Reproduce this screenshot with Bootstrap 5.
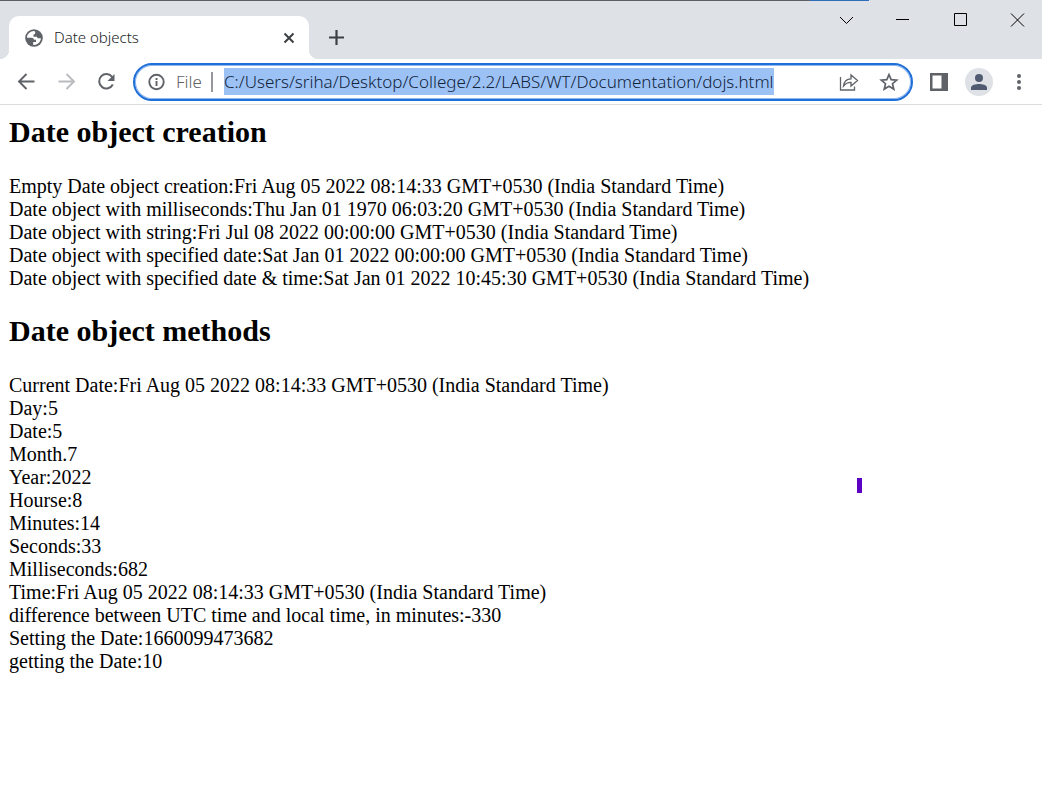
<!DOCTYPE html>
<html lang="en">
<head>
<meta charset="utf-8">
<meta name="viewport" content="width=device-width, initial-scale=1">
<title>Date objects</title>
<link rel="stylesheet" href="https://cdn.jsdelivr.net/npm/bootstrap@5.3.0/dist/css/bootstrap.min.css">
<style>
  body { font-family: "Noto Sans", "Open Sans", sans-serif; background: #fff; }
  svg { display: block; flex: none; fill: none; }
  .top-line { height: 1px; background: #dee1e6; }
  .top-line .dark-part { flex: 0 1 810px; background: #5f6066; }
  .top-line .blue-part { width: 59px; background: #2f6db8; }
  .tab-strip { background: #dee1e6; height: 58px; }
  .page-tab { width: 300px; height: 43px; margin-left: 9px; border-radius: 10px 10px 0 0; background: #fff; color: #3c4043; font-size: 15px; padding: 0 13px 0 16px; }
  .page-tab::before, .page-tab::after { content: ""; position: absolute; bottom: 0; width: 9px; height: 9px; }
  .page-tab::before { left: -9px; background: radial-gradient(circle at 0 0, transparent 9px, #fff 9px); }
  .page-tab::after { right: -9px; background: radial-gradient(circle at 100% 0, transparent 9px, #fff 9px); }
  .tab-title { margin-left: 11px; font-weight: 300; color: #202124; }
  .plain-btn { border: 0; background: none; padding: 0; color: #5f6368; stroke: currentColor; }
  .new-tab { margin: 0 0 14px 16px; color: #3c4043; }
  .win-btns { gap: 37px; margin-right: 15px; padding-top: 9px; }
  .win-btns .plain-btn { color: #000; }
  .tool-row { height: 46px; border-bottom: 1px solid #dadce0; padding: 0 13px 0 16px; }
  .nav-btns { gap: 20px; }
  .right-btns { gap: 16px; margin-left: 16px; }
  .address { height: 38px; border: 2px solid #1f6fd8; border-radius: 19px; margin-left: 16px; padding: 0 12px 0 11px; box-shadow: inset 0 0 0 1px #8fb9f0; }
  .scheme { color: #5f6368; font-size: 17px; font-weight: 300; line-height: 20px; margin-left: 10px; width: 28px; }
  .scheme-sep { width: 2px; height: 20px; background: #96989b; margin: 0 11px 0 7px; }
  .url-field { border: 0; outline: 0; padding: 0; font-size: 17px; font-weight: 300; height: 27px; line-height: 27px; color: #1d2b3e; min-width: 0; }
  .url-field::selection { background: #9cc2f5; color: #12243c; }
  .avatar { width: 28px; height: 28px; background: #dee1e6; }
  .doc { font: 20px/23px "Liberation Serif", serif; color: #000; padding: 10px 9px; }
  .doc h2 { font-size: 30px; line-height: 34px; font-weight: 700; margin: 0 0 26px; }
  .doc p { margin: 0 0 24px; }
  .caret-mark { top: 478px; left: 82.2%; width: 5px; height: 15px; background: #5b00c4; }
</style>
</head>
<body>
<header>
  <div class="top-line d-flex"><div class="dark-part"></div><div class="blue-part"></div></div>
  <div class="tab-strip d-flex align-items-end">
    <div class="page-tab position-relative d-flex align-items-center">
      <svg width="18" height="18" viewBox="0 0 18 18"><circle cx="9" cy="9" r="8.800" fill="#5f6368"/><path d="M9.500 2.100C5.400 1.900 2 5 2 8.700H6.400C8 8.700 8.900 9.600 8.900 10.800H11V13H8.200V15.900C12 16.300 15.900 13.300 15.900 9.300H13.500C12.500 9.300 12 8.700 12 7.800H8.500V5.400C9.700 5.400 10.200 5 10.200 4.200V3.200Z" fill="#fff"/></svg>
      <span class="tab-title flex-grow-1">Date objects</span>
      <button class="plain-btn" aria-label="Close tab"><svg width="14" height="14" viewBox="0 0 14 14" stroke="#3c4043" stroke-width="2"><path d="M2.500 2.500l9 9M11.500 2.500l-9 9"/></svg></button>
    </div>
    <button class="plain-btn new-tab" aria-label="New tab"><svg width="22" height="15" viewBox="0 0 22 15" stroke-width="2.200"><path d="M4 7.500h15M11.500 0v15"/></svg></button>
    <div class="win-btns d-flex align-self-start ms-auto">
      <button class="plain-btn" aria-label="Search tabs"><svg width="20" height="20" viewBox="0 0 20 20"><path d="M4 7l6.500 6.500L17 7"/></svg></button>
      <button class="plain-btn" aria-label="Minimize"><svg width="20" height="20" viewBox="0 0 20 20"><path d="M3 9.500h13"/></svg></button>
      <button class="plain-btn" aria-label="Maximize"><svg width="20" height="20" viewBox="0 0 20 20"><path d="M4.500 3.500h12v12h-12z"/></svg></button>
      <button class="plain-btn" aria-label="Close window"><svg width="20" height="20" viewBox="0 0 20 20"><path d="M4 3.500l13 13M17 3.500l-13 13"/></svg></button>
    </div>
  </div>
  <div class="tool-row d-flex align-items-center">
    <div class="nav-btns d-flex">
      <button class="plain-btn" aria-label="Back"><svg width="20" height="20" viewBox="0 0 20 20" stroke-width="1.900"><path d="M18.500 9.500H3.500M10.500 2L3 9.500l7.500 7.500"/></svg></button>
      <button class="plain-btn" aria-label="Forward" disabled><svg width="20" height="20" viewBox="0 0 20 20" stroke="#b9bbbe" stroke-width="1.900"><path d="M2.500 9.500h15M10.500 2l7.500 7.500-7.500 7.500"/></svg></button>
      <button class="plain-btn" aria-label="Reload"><svg width="21" height="20" viewBox="0 0 21 20" stroke-width="2"><path d="M16.800 12.500A7.200 7.200 0 1 1 16.200 5"/><path d="M18.500 2v7h-7z" fill="currentColor" stroke="none"/></svg></button>
    </div>
    <div class="address d-flex align-items-center flex-grow-1">
      <svg width="20" height="20" viewBox="0 0 20 20" stroke="#5f6368" stroke-width="1.900"><circle cx="10.500" cy="10" r="7.200"/><path d="M10.500 9v5M10.500 6v1.900"/></svg>
      <label class="scheme" for="url">File</label><span class="scheme-sep"></span>
      <input id="url" class="url-field flex-grow-1" type="text" value="C:/Users/sriha/Desktop/College/2.2/LABS/WT/Documentation/dojs.html" spellcheck="false">
      <button class="plain-btn" aria-label="Share"><svg width="20" height="20" viewBox="0 0 20 20" stroke-width="1.300"><path d="M1.500 5v13h14v-3.500M4.500 14C5 9.500 7.500 7 12 6.800V3l6.500 5.500L12 14v-3.700C8.500 10.200 6.500 11.500 4.500 14z"/></svg></button>
      <button class="plain-btn ms-3 ps-1" aria-label="Bookmark"><svg width="20" height="20" viewBox="0 0 20 20" stroke-width="1.700"><path d="M10 2.600l2.200 5 5.500.5-4.200 3.600 1.300 5.400L10 14.200l-4.800 2.900 1.300-5.400L2.300 8.100l5.500-.5z"/></svg></button>
    </div>
    <div class="right-btns d-flex align-items-center">
      <button class="plain-btn" aria-label="Side panel"><svg width="20" height="20" viewBox="0 0 20 20"><path d="M1 1h18v18H1zM3.500 3.500v13h9v-13z" fill="currentColor" fill-rule="evenodd" stroke="none"/></svg></button>
      <button class="plain-btn avatar rounded-circle d-flex align-items-center justify-content-center" aria-label="Profile"><svg width="18" height="18" viewBox="0 0 18 18" stroke="none"><circle cx="9" cy="5" r="4" fill="#505a70"/><path d="M1 17v-2.500C1 12 6 11 9 11s8 1 8 3.500V17z" fill="#505a70"/></svg></button>
      <button class="plain-btn" aria-label="Menu"><svg width="20" height="20" viewBox="0 0 20 20" stroke="none"><g fill="#5f6368"><circle cx="10" cy="4" r="2"/><circle cx="10" cy="10" r="2"/><circle cx="10" cy="16" r="2"/></g></svg></button>
    </div>
  </div>
</header>
<main class="doc">
  <h2>Date object creation</h2>
  <p>Empty Date object creation:Fri Aug 05 2022 08:14:33 GMT+0530 (India Standard Time)<br>Date object with milliseconds:Thu Jan 01 1970 06:03:20 GMT+0530 (India Standard Time)<br>Date object with string:Fri Jul 08 2022 00:00:00 GMT+0530 (India Standard Time)<br>Date object with specified date:Sat Jan 01 2022 00:00:00 GMT+0530 (India Standard Time)<br>Date object with specified date &amp; time:Sat Jan 01 2022 10:45:30 GMT+0530 (India Standard Time)</p>
  <h2>Date object methods</h2>
  <p>Current Date:Fri Aug 05 2022 08:14:33 GMT+0530 (India Standard Time)<br>Day:5<br>Date:5<br>Month.7<br>Year:2022<br>Hourse:8<br>Minutes:14<br>Seconds:33<br>Milliseconds:682<br>Time:Fri Aug 05 2022 08:14:33 GMT+0530 (India Standard Time)<br>difference between UTC time and local time, in minutes:-330<br>Setting the Date:1660099473682<br>getting the Date:10</p>
</main>
<div class="caret-mark position-absolute"></div>
<script src="https://cdn.jsdelivr.net/npm/bootstrap@5.3.0/dist/js/bootstrap.bundle.min.js"></script>
<script>
  const url = document.getElementById('url');
  url.focus();
  url.select();
</script>
</body>
</html>
